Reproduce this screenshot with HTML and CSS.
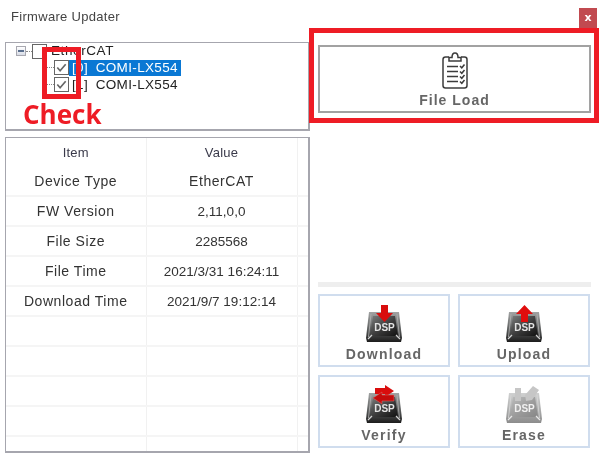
FILE: index.html
```html
<!DOCTYPE html>
<html lang="en">
<head>
<meta charset="utf-8">
<title>Firmware Updater</title>
<link rel="stylesheet" href="styles.css">
</head>
<body>
<svg class="defs" width="0" height="0" aria-hidden="true">
  <defs>
    <linearGradient id="capDark" x1="0" y1="0" x2="0" y2="1">
      <stop offset="0" stop-color="#a2a4a4"/>
      <stop offset="0.5" stop-color="#666868"/>
      <stop offset="1" stop-color="#1c1c1c"/>
    </linearGradient>
    <linearGradient id="capFace" x1="0" y1="0" x2="1" y2="1">
      <stop offset="0" stop-color="#7c7e7e"/>
      <stop offset="0.55" stop-color="#3a3a3a"/>
      <stop offset="1" stop-color="#101010"/>
    </linearGradient>
    <symbol id="dsp" viewBox="0 0 36 38">
      <path d="M3 8h30l3 26-1 4H1l-1-4z" fill="url(#capDark)"/>
      <path d="M7 12h22l3 20H4z" fill="url(#capFace)"/>
      <path d="M2 35l4-4M34 35l-4-4" stroke="#d4d4d4" stroke-width="1.300" fill="none"/>
      <path d="M5 10L2.500 33M31 10l2.500 23" stroke="#b4b4b4" stroke-width="0.800" fill="none"/>
    </symbol>
  </defs>
</svg>
<div class="app">
  <header class="titlebar">
    <span class="title">Firmware Updater</span>
    <span class="close">x</span>
  </header>
  <main class="main">
    <section class="left">
      <div class="tree">
        <div class="node root">
          <span class="expander"></span>
          <span class="dots short"></span>
          <span class="check"></span>
          <span class="label">EtherCAT</span>
        </div>
        <div class="node child">
          <span class="dots"></span>
          <span class="check on"><svg viewBox="0 0 14 14"><path d="M2.500 7l3 3.500 6-7"/></svg></span>
          <span class="label selected">[0] COMI-LX554</span>
        </div>
        <div class="node child">
          <span class="dots"></span>
          <span class="check on"><svg viewBox="0 0 14 14"><path d="M2.500 7l3 3.500 6-7"/></svg></span>
          <span class="label">[1] COMI-LX554</span>
        </div>
      </div>
      <div class="grid-box">
        <table class="props">
          <colgroup><col class="c1"><col class="c2"><col class="c3"></colgroup>
          <thead>
            <tr><th>Item</th><th>Value</th><th></th></tr>
          </thead>
          <tbody>
            <tr><td>Device Type</td><td>EtherCAT</td><td></td></tr>
            <tr><td>FW Version</td><td class="tight">2,11,0,0</td><td></td></tr>
            <tr><td>File Size</td><td class="tight">2285568</td><td></td></tr>
            <tr><td>File Time</td><td class="tight">2021/3/31 16:24:11</td><td></td></tr>
            <tr><td>Download Time</td><td class="tight">2021/9/7 19:12:14</td><td></td></tr>
            <tr><td></td><td></td><td></td></tr>
            <tr><td></td><td></td><td></td></tr>
            <tr><td></td><td></td><td></td></tr>
            <tr><td></td><td></td><td></td></tr>
            <tr><td></td><td></td><td></td></tr>
          </tbody>
        </table>
      </div>
    </section>
    <section class="right">
      <div class="highlight">
        <button class="file-load">
          <svg class="clip" viewBox="0 0 26 37" fill="none" stroke="#3c3c3c">
            <path d="M7 5H3.500Q1 5 1 7.500V33.500Q1 36 3.500 36H22.500Q25 36 25 33.500V7.500Q25 5 22.500 5H19" stroke-width="1.500"/>
            <path d="M7 9V5.500H10Q10 1 13 1T16 5.500H19V9z" stroke-width="1.500"/>
            <path d="M5 14.500H16M5 19.500H16M5 24.500H16M5 29.500H16" stroke-width="1.700"/>
            <path d="M18 14l1.800 1.800L22.500 12.500M18 19.500l1.800 1.800 2.700-3.300M18 24.500l1.800 1.800 2.700-3.300M18 29.500l1.800 1.800 2.700-3.300" stroke-width="1.500"/>
          </svg>
          <span>File Load</span>
        </button>
      </div>
      <div class="separator"></div>
      <div class="actions">
        <button class="action">
          <span class="dsp">
            <svg class="cap" viewBox="0 0 36 38"><use href="#dsp"/><text x="18.500" y="27" class="dsp-text">DSP</text>
              <path d="M15 1h7v8h5L18.500 18 10 9h5z" fill="#d90d0d"/></svg>
          </span>
          <span>Download</span>
        </button>
        <button class="action">
          <span class="dsp">
            <svg class="cap" viewBox="0 0 36 38"><use href="#dsp"/><text x="18.500" y="27" class="dsp-text">DSP</text>
              <path d="M18.500 1L27 10h-5v8h-7v-8h-5z" fill="#e00d0d"/></svg>
          </span>
          <span>Upload</span>
        </button>
        <button class="action">
          <span class="dsp">
            <svg class="cap" viewBox="0 0 36 38"><use href="#dsp"/><text x="18.500" y="27" class="dsp-text">DSP</text>
              <path d="M9 3h10V0l9 6-9 6V9H9z" fill="#d90d0d"/>
              <path d="M28 10H16V7l-9 6 9 6v-3h12z" fill="#c40c0c" stroke="#e86a6a" stroke-width="0.500"/></svg>
          </span>
          <span>Verify</span>
        </button>
        <button class="action">
          <span class="dsp">
            <svg class="cap faded" viewBox="0 0 36 38"><use href="#dsp"/><text x="18.500" y="27" class="dsp-text">DSP</text>
              <path d="M9 3h6v13H9zM19 10l8-9 6 4-7 10-6 1z" fill="#8e8e8e"/></svg>
          </span>
          <span>Erase</span>
        </button>
      </div>
    </section>
  </main>
  <div class="check-mark"></div>
  <div class="check-note">Check</div>
</div>
</body>
</html>
```

FILE: styles.css
```css
* { box-sizing: border-box; }
html, body { margin: 0; padding: 0; background: #fff; }
.defs { position: absolute; }
.app {
  position: relative;
  width: 600px;
  height: 456px;
  overflow: hidden;
  background: #fff;
  font-family: "Liberation Sans", Arial, sans-serif;
  color: #333;
  filter: blur(0.4px);
}
.titlebar {
  display: flex;
  justify-content: space-between;
  align-items: flex-start;
  height: 8px;
  padding-left: 11px;
  padding-right: 3px;
  margin-top: 8px;
}
.title { font-size: 13px; line-height: 17px; color: #444; letter-spacing: 0.3px; }
.close {
  width: 18px;
  height: 20px;
  background: #c14a50;
  color: #fff;
  font: bold 11px/20px "DejaVu Sans", sans-serif;
  text-align: center;
  position: relative;
  z-index: 2;
}
.main {
  display: grid;
  grid-template-columns: 305px 291px;
  padding-left: 5px;
}
.left { padding-top: 26px; display: flex; flex-direction: column; gap: 6px; }
.tree {
  height: 89px;
  border: 1px solid #a6a6ae;
  border-bottom-width: 2px;
  border-right-width: 2px;
  padding: 0 0 0 10px;
}
.node { display: flex; align-items: center; height: 17px; font-size: 13.500px; letter-spacing: 0.35px; word-spacing: 3.500px; color: #222; }
.root { height: 16px; }
.expander {
  width: 10px;
  height: 10px;
  border: 1px solid #a8a8b0;
  background: linear-gradient(#fff, #d8dce6);
  position: relative;
  flex: none;
}
.expander::after {
  content: "";
  position: absolute;
  left: 1px;
  right: 1px;
  top: 3px;
  height: 2px;
  background: #5a6f8e;
}
.dots { width: 6px; border-top: 1px dotted #888; flex: none; }
.check {
  width: 15px;
  height: 15px;
  border: 1.500px solid #666;
  background: #fff;
  flex: none;
}
.check svg { display: block; width: 100%; height: 100%; fill: none; stroke: #666; stroke-width: 1.800; }
.label { padding: 0 3px 0 3px; line-height: 16px; white-space: nowrap; }
.root .label { padding-left: 4px; letter-spacing: 0.6px; }
.selected { background: #0a78d4; color: #fff; }
.child { padding-left: 26px; }
.child .dots { width: 12px; }
.grid-box {
  height: 316px;
  border: 1px solid #a6a6ae;
  border-bottom-width: 2px;
  border-right-width: 2px;
  overflow: hidden;
}
.props {
  border-collapse: collapse;
  table-layout: fixed;
  width: 302px;
  font-size: 14px;
  letter-spacing: 0.55px;
  color: #333;
}
.c1 { width: 140px; }
.c2 { width: 151px; }
.c3 { width: 11px; }
.props th {
  height: 28px;
  font-weight: normal;
  font-size: 13px;
  letter-spacing: 0.2px;
  border-right: 1.500px solid #f1f1f1;
  padding: 0;
  color: #3a3a4a;
}
.props td {
  height: 30px;
  padding: 0;
  text-align: center;
  border-right: 1.500px solid #f1f1f1;
  border-bottom: 2px solid #f5f5f5;
}
.props th:last-child, .props td:last-child { border-right: 0; }
.props .tight { letter-spacing: 0; font-size: 13.500px; }
.right { margin-left: -1px; padding-top: 12px; display: flex; flex-direction: column; }
.highlight {
  width: 290px;
  height: 95px;
  border: 5px solid #ee1c25;
  padding: 12px 3px 5px 4px;
  position: relative;
}
button { font-family: inherit; background: #fff; cursor: pointer; }
.file-load {
  width: 273px;
  height: 68px;
  border: 2px solid #a2a2a2;
  padding: 5px 0 0;
  display: flex;
  flex-direction: column;
  align-items: center;
  gap: 3px;
  font-size: 14px;
  font-weight: bold;
  letter-spacing: 1px;
  color: #666;
}
.clip { width: 26px; height: 37px; display: block; flex: none; }
.separator { margin: 159px 0 0 9px; width: 273px; height: 5px; background: #eee; }
.actions {
  margin: 7px 0 0 9px;
  display: grid;
  grid-template-columns: 132px 132px;
  grid-auto-rows: 73px;
  column-gap: 8px;
  row-gap: 8px;
}
.action {
  border: 2px solid #d0ddee;
  padding: 8px 0 0;
  display: flex;
  flex-direction: column;
  align-items: center;
  gap: 4px;
  font-size: 14px;
  font-weight: bold;
  letter-spacing: 1.200px;
  color: #666;
}
.dsp { display: block; width: 36px; height: 38px; flex: none; }
.cap { display: block; width: 36px; height: 38px; }
.cap use { width: 36px; height: 38px; }
.faded { opacity: 0.5; }
.dsp-text {
  font: bold 10px "Liberation Sans", sans-serif;
  fill: #e4e4e4;
  text-anchor: middle;
  letter-spacing: 0;
}
.check-mark {
  position: absolute;
  left: 42px;
  top: 47px;
  width: 39px;
  height: 52px;
  border: 5px solid #ee1c25;
}
.check-note {
  position: absolute;
  left: 23px;
  top: 99px;
  font: bold 26px/30px "Open Sans", sans-serif;
  color: #ee1c25;
}
```
